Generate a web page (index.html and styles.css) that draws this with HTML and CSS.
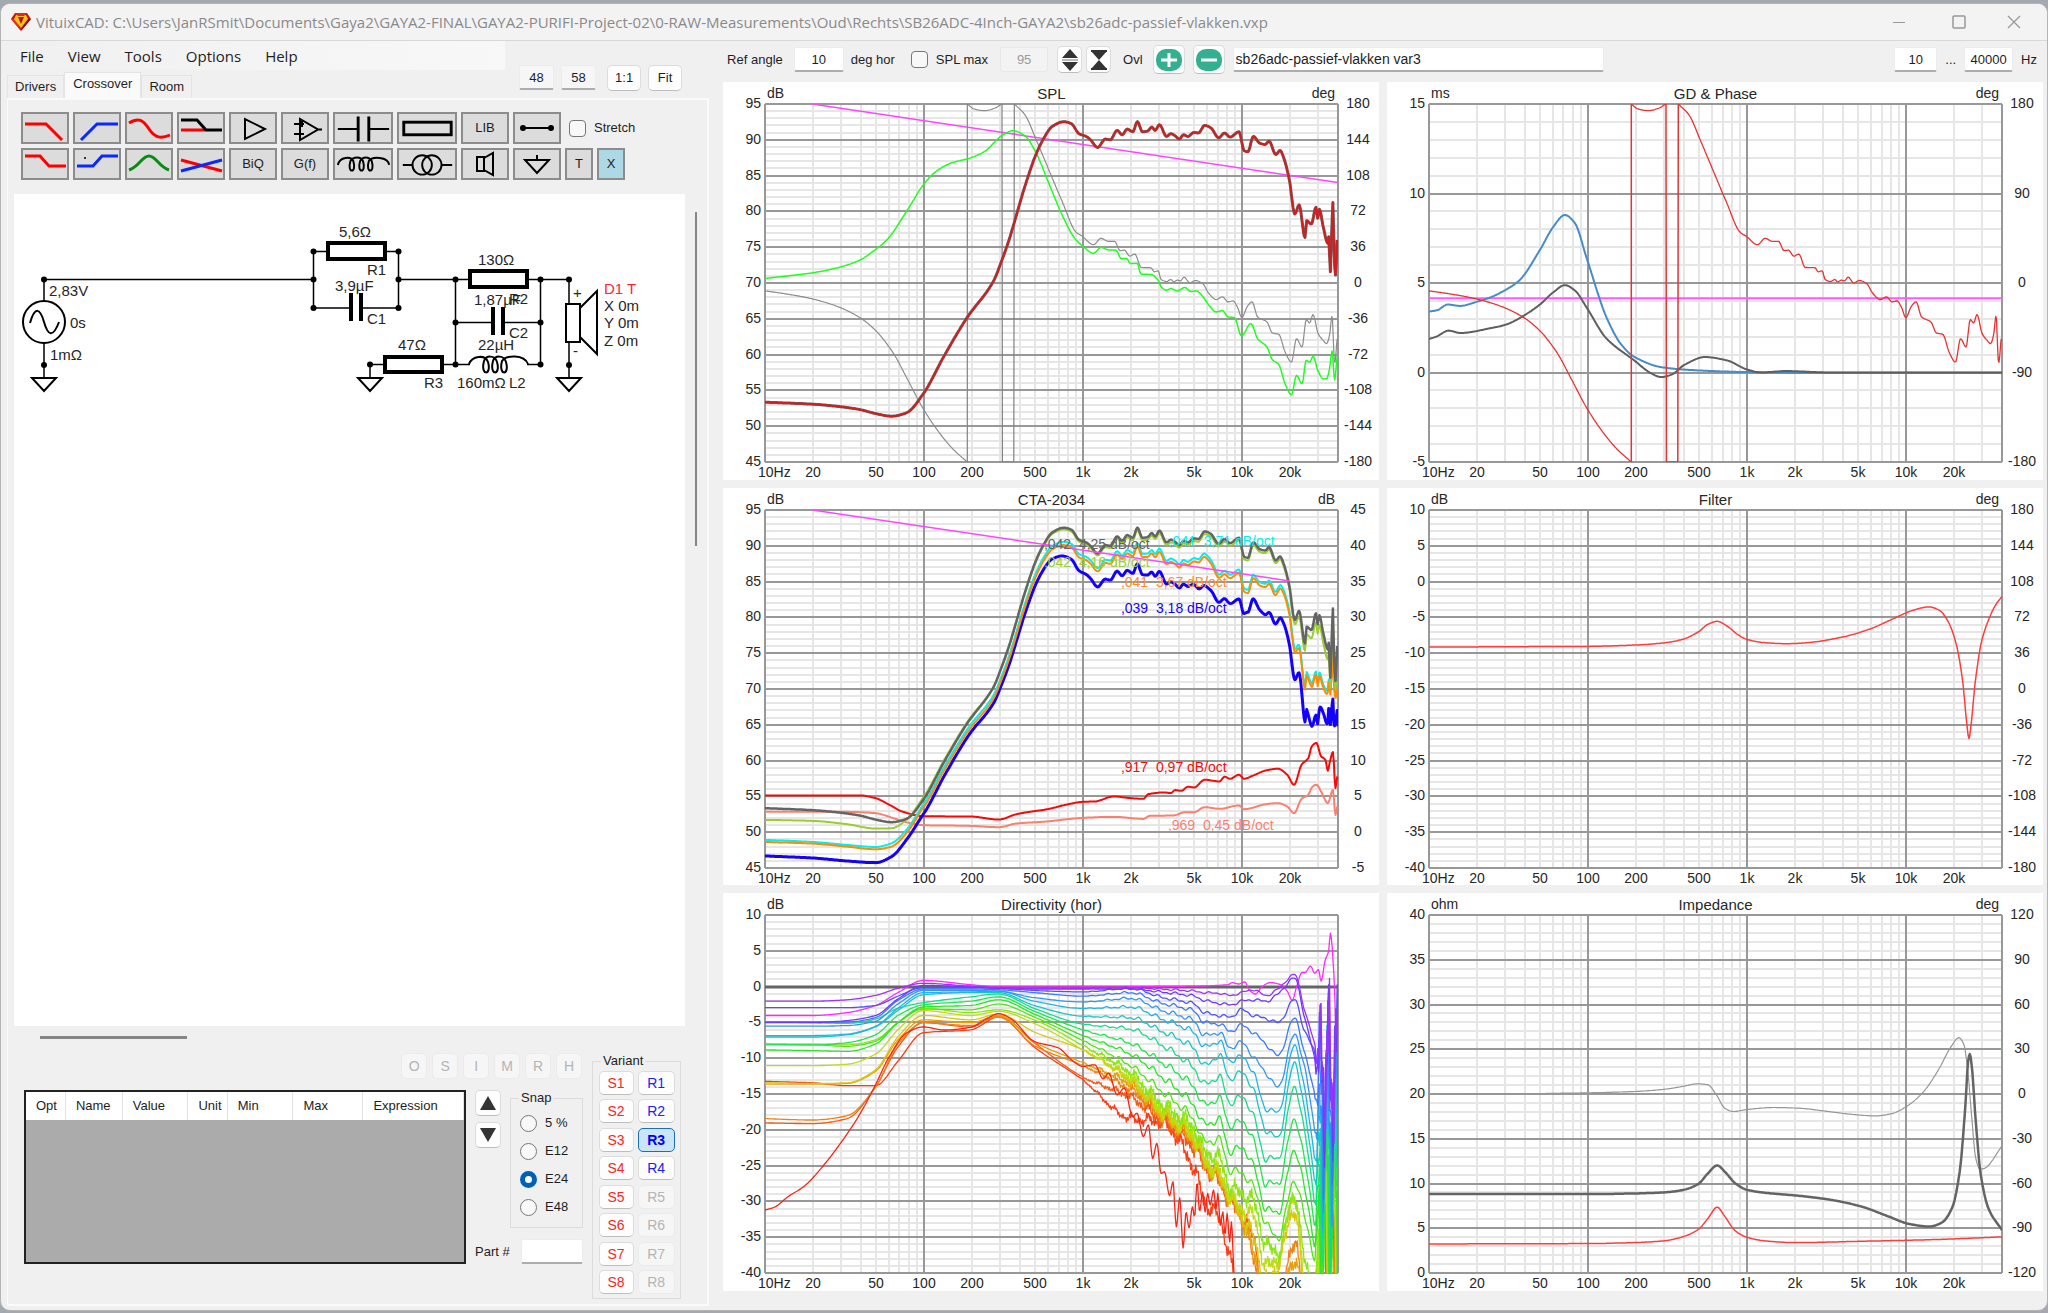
FILE: index.html
```html
<!DOCTYPE html>
<html lang="en">
<head>
<meta charset="utf-8">
<title>VituixCAD</title>
<link rel="stylesheet" href="styles.css">
</head>
<body>
<div class="window">
  <header class="titlebar">
    <svg class="logo" width="20" height="20" viewBox="0 0 20 20"><path d="M4 1h12l4 6-10 12L0 7z" fill="#c8140a"/><path d="M0 7h5l5 12z" fill="#e83020"/><path d="M20 7h-5l-5 12z" fill="#8c0a05"/><path d="M5 3h10l2 4-7 9-7-9z" fill="#f5c21a"/><path d="M7 5h6l-3 7z" fill="#b01808"/><path d="M4 1h12l-3 3H7z" fill="#e02a18"/></svg>
    <h1 class="title">VituixCAD: C:\Users\JanRSmit\Documents\Gaya2\GAYA2-FINAL\GAYA2-PURIFI-Project-02\0-RAW-Measurements\Oud\Rechts\SB26ADC-4Inch-GAYA2\sb26adc-passief-vlakken.vxp</h1>
    <div class="controls">
      <button type="button" aria-label="Minimize"><svg width="14" height="14"><path d="M1 7.500h12" stroke="#999"/></svg></button>
      <button type="button" aria-label="Maximize"><svg width="14" height="14"><rect x="1" y="1" width="12" height="12" rx="1" fill="none" stroke="#999" stroke-width="1.500"/></svg></button>
      <button type="button" aria-label="Close"><svg width="14" height="14"><path d="M1 1l12 12M13 1L1 13" stroke="#999" stroke-width="1.300"/></svg></button>
    </div>
  </header>
  <div class="body">
    <section class="left">
      <div class="head">
        <div class="head-main">
          <nav class="menu"><a href="#file">File</a><a href="#view">View</a><a href="#tools">Tools</a><a href="#options">Options</a><a href="#help">Help</a></nav>
          <div class="tabs" role="tablist">
            <button type="button" role="tab">Drivers</button><button type="button" role="tab" class="active" aria-selected="true">Crossover</button><button type="button" role="tab">Room</button>
          </div>
        </div>
        <div class="zoom">
          <input class="field num" value="48" aria-label="Columns"><input class="field num" value="58" aria-label="Rows">
          <button type="button" class="btn">1:1</button><button type="button" class="btn">Fit</button>
        </div>
      </div>
      <div class="page">
        <div class="toolbar">
          <div class="tool-row">
            <button type="button" class="tool" aria-label="Low pass"><svg viewBox="0 0 48 32"><path class="r" d="M4 12H25L41 28"/></svg></button>
            <button type="button" class="tool" aria-label="High pass"><svg viewBox="0 0 48 32"><path class="b" d="M8 28L24 12H45"/></svg></button>
            <button type="button" class="tool" aria-label="Shelf"><svg viewBox="0 0 48 32"><path class="r" d="M4 11C14 5 18 8 24 17S36 27 45 23"/></svg></button>
            <button type="button" class="tool" aria-label="Low shelf"><svg viewBox="0 0 48 32"><path class="r" d="M4 18H28"/><path class="k" d="M4 8H20L29 18H45"/></svg></button>
            <button type="button" class="tool" aria-label="Buffer"><svg viewBox="0 0 48 32"><path class="k n" d="M16 7V27L36 17Z"/></svg></button>
            <button type="button" class="tool" aria-label="Op amp"><svg viewBox="0 0 48 32"><path class="k t" d="M19 7V28L37 17.500ZM13 12H23M13 22H19M20 22H23M21 9V15M37 17.500H41"/></svg></button>
            <button type="button" class="tool wide" aria-label="Capacitor"><svg viewBox="0 0 62 32"><path class="k t" d="M5 17H26M37 17H58"/><path class="k" d="M26 4V30M37 4V30"/></svg></button>
            <button type="button" class="tool wide" aria-label="Resistor"><svg viewBox="0 0 62 32"><rect class="k" x="7" y="10" width="49" height="13"/></svg></button>
            <button type="button" class="tool">LIB</button>
            <button type="button" class="tool" aria-label="Wire"><svg viewBox="0 0 48 32"><path class="k t" d="M10 16H38"/><circle cx="10" cy="16" r="3"/><circle cx="38" cy="16" r="3"/></svg></button>
            <label class="check"><input type="checkbox">Stretch</label>
          </div>
          <div class="tool-row">
            <button type="button" class="tool" aria-label="Low pass shelf"><svg viewBox="0 0 48 32"><path class="r" d="M4 8H19L28 18H45"/></svg></button>
            <button type="button" class="tool" aria-label="High pass shelf"><svg viewBox="0 0 48 32"><path class="b" d="M4 18H20L29 8H45"/><circle cx="12" cy="10" r="1"/></svg></button>
            <button type="button" class="tool" aria-label="Peak"><svg viewBox="0 0 48 32"><path class="g" d="M4 22C14 19 17 8 24 8S34 19 44 22"/></svg></button>
            <button type="button" class="tool" aria-label="All pass"><svg viewBox="0 0 48 32"><path class="r" d="M4 12L45 23"/><path class="b" d="M4 23L45 12"/></svg></button>
            <button type="button" class="tool">BiQ</button>
            <button type="button" class="tool">G(f)</button>
            <button type="button" class="tool wide" aria-label="Inductor"><svg viewBox="0 0 62 32"><path class="k n" d="M5 17C7 8 19 8 21 13C25 26 14 26 18 13C21 8 29 8 31 13C35 26 24 26 28 13C31 8 37 8 40 13C44 26 33 26 37 13C40 8 57 8 58 17"/></svg></button>
            <button type="button" class="tool wide" aria-label="Transformer"><svg viewBox="0 0 62 32"><circle class="k n" cx="26" cy="17" r="10"/><circle class="k n" cx="36" cy="17" r="10"/><path class="k t" d="M6 17H16M46 17H57"/></svg></button>
            <button type="button" class="tool" aria-label="Driver"><svg viewBox="0 0 48 32"><path class="k n" d="M16 9H23V23H16ZM23 10L32 5V27L23 22"/></svg></button>
            <button type="button" class="tool" aria-label="Ground"><svg viewBox="0 0 48 32"><path class="k n" d="M12 12H36L24 25Z"/><path class="k t" d="M24 7V12"/></svg></button>
            <button type="button" class="tool small">T</button>
            <button type="button" class="tool small on">X</button>
          </div>
        </div>
        <div class="canvas-row">
          <div class="canvas">
            <svg class="schematic" width="660" height="240" viewBox="14 194 660 240">
              <g class="wire">
                <path d="M44 300V279.500H313.500M326 251.500H313.500V308H352M386 251.500H398.500V308H361M398.500 279.500H468M455.500 279.500V364.500M455.500 322.500H493M503 322.500H540.500M527 279.500H569V304M540.500 279.500V364.500M527 364.500H540.500M443 364.500H470M383 364.500H370V378M44 343V378M569 342V378"/>
              </g>
              <g class="part">
                <rect x="328" y="243" width="57" height="16"/><rect x="470" y="271" width="57" height="16"/><rect x="385" y="357" width="57" height="15"/>
                <path d="M351 293V321M361 293V321M493 307V335M503 307V335"/>
              </g>
              <g class="line">
                <circle cx="44" cy="322" r="21"/><path d="M30 323C35 306 40 308 44 322S53 338 59 322"/>
                <path d="M32 378H56L44 391ZM358 378H382L370 391ZM557 378H581L569 391Z"/>
                <rect x="566" y="304" width="14" height="38"/><path d="M580 308L597 291V354L580 337"/>
                <path d="M469 364C472 356 485 354 488 362C492 376 480 376 484 361C486 355 495 355 497 362C501 376 489 376 493 361C495 355 504 355 506 362C510 376 498 376 502 361C506 355 524 354 528 364"/>
              </g>
              <g class="node">
                <circle cx="44" cy="279.500" r="3"/><circle cx="44" cy="365" r="3"/><circle cx="313.500" cy="251.500" r="3"/><circle cx="313.500" cy="279.500" r="3"/><circle cx="313.500" cy="308" r="3"/><circle cx="398.500" cy="251.500" r="3"/><circle cx="398.500" cy="279.500" r="3"/><circle cx="398.500" cy="308" r="3"/><circle cx="455.500" cy="279.500" r="3"/><circle cx="455.500" cy="322.500" r="3"/><circle cx="455.500" cy="364.500" r="3"/><circle cx="540.500" cy="279.500" r="3"/><circle cx="540.500" cy="322.500" r="3"/><circle cx="540.500" cy="364.500" r="3"/><circle cx="569" cy="279.500" r="3"/><circle cx="569" cy="365" r="3"/><circle cx="370" cy="364.500" r="3"/>
              </g>
              <text x="49" y="296">2,83V</text><text x="70" y="328">0s</text><text x="50" y="360">1mΩ</text>
              <text x="339" y="237">5,6Ω</text><text x="367" y="275">R1</text><text x="335" y="291">3,9µF</text><text x="367" y="324">C1</text>
              <text x="478" y="265">130Ω</text><text x="509" y="304">R2</text><text x="474" y="305">1,87µF</text><text x="509" y="338">C2</text>
              <text x="478" y="350">22µH</text><text x="398" y="350">47Ω</text><text x="424" y="388">R3</text><text x="457" y="388">160mΩ</text><text x="509" y="388">L2</text>
              <text x="573" y="298">+</text><text x="573" y="356">-</text><text class="red" x="604" y="294">D1 T</text>
              <text x="604" y="311">X 0m</text><text x="604" y="328">Y 0m</text><text x="604" y="346">Z 0m</text>
            </svg>
          </div>
          <div class="vscroll"><i></i></div>
        </div>
        <div class="hscroll"><i></i></div>
        <div class="bottom">
          <div class="parts">
            <div class="letters"><button type="button" class="btn" disabled>O</button><button type="button" class="btn" disabled>S</button><button type="button" class="btn" disabled>I</button><button type="button" class="btn" disabled>M</button><button type="button" class="btn" disabled>R</button><button type="button" class="btn" disabled>H</button></div>
            <div class="parts-row">
              <div class="table-box">
                <table><colgroup><col style="width:9%"><col style="width:13%"><col style="width:15%"><col style="width:9%"><col style="width:15%"><col style="width:16%"><col></colgroup>
                <thead><tr><th>Opt</th><th>Name</th><th>Value</th><th>Unit</th><th>Min</th><th>Max</th><th>Expression</th></tr></thead></table>
              </div>
              <div class="side">
                <div class="updown">
                  <button type="button" class="btn" aria-label="Up"><svg width="16" height="14"><path d="M8 0L16 14H0Z" fill="#333"/></svg></button>
                  <button type="button" class="btn" aria-label="Down"><svg width="16" height="14"><path d="M0 0H16L8 14Z" fill="#333"/></svg></button>
                </div>
                <fieldset class="snap"><legend>Snap</legend>
                  <label><input type="radio" name="snap">5 %</label><label><input type="radio" name="snap">E12</label><label><input type="radio" name="snap" checked>E24</label><label><input type="radio" name="snap">E48</label>
                </fieldset>
                <label class="part-no">Part # <input class="field"></label>
              </div>
            </div>
          </div>
          <fieldset class="variant"><legend>Variant</legend>
            <div class="variant-grid">
              <button type="button" class="btn s">S1</button><button type="button" class="btn v">R1</button>
              <button type="button" class="btn s">S2</button><button type="button" class="btn v">R2</button>
              <button type="button" class="btn s">S3</button><button type="button" class="btn v current">R3</button>
              <button type="button" class="btn s">S4</button><button type="button" class="btn v">R4</button>
              <button type="button" class="btn s">S5</button><button type="button" class="btn v" disabled>R5</button>
              <button type="button" class="btn s">S6</button><button type="button" class="btn v" disabled>R6</button>
              <button type="button" class="btn s">S7</button><button type="button" class="btn v" disabled>R7</button>
              <button type="button" class="btn s">S8</button><button type="button" class="btn v" disabled>R8</button>
            </div>
          </fieldset>
        </div>
      </div>
    </section>
    <section class="right">
      <div class="bar">
        <label class="bar-label">Ref angle <input class="field angle" value="10"></label><span class="hor">deg hor</span>
        <label class="check max"><input type="checkbox">SPL max</label>
        <input class="field spl" value="95" disabled aria-label="SPL maximum">
        <button type="button" class="btn sq" aria-label="Expand scale"><svg width="18" height="22"><path d="M9 0L17 9H1ZM1 13H17L9 22Z" fill="#333"/><path d="M1 11H17" stroke="#777"/></svg></button>
        <button type="button" class="btn sq" aria-label="Compress scale"><svg width="18" height="20"><path d="M1 1H17L9 10ZM1 19H17L9 10Z" fill="#333"/><path d="M1 1H17M1 19H17" stroke="#333" stroke-width="2"/></svg></button>
        <span class="ovl">Ovl</span>
        <button type="button" class="btn ov" aria-label="Add overlay"><svg width="26" height="22"><rect width="26" height="22" rx="10" fill="#32b090"/><path d="M5 11H21M13 4V18" stroke="#fff" stroke-width="3"/></svg></button>
        <button type="button" class="btn ov" aria-label="Remove overlay"><svg width="26" height="22"><rect width="26" height="22" rx="10" fill="#32b090"/><path d="M5 11H21" stroke="#fff" stroke-width="3"/></svg></button>
        <input class="field name" value="sb26adc-passief-vlakken var3" aria-label="Overlay name">
        <div class="range"><input class="field lo" value="10" aria-label="From"><span>...</span><input class="field hi" value="40000" aria-label="To"><span>Hz</span></div>
      </div>
      <div class="charts">
        <figure class="panel"><svg data-chart="spl"></svg></figure><figure class="panel"><svg data-chart="gd"></svg></figure>
        <figure class="panel"><svg data-chart="cta"></svg></figure><figure class="panel"><svg data-chart="filter"></svg></figure>
        <figure class="panel"><svg data-chart="dir"></svg></figure><figure class="panel"><svg data-chart="imp"></svg></figure>
      </div>
    </section>
  </div>
</div>
<script src="charts.js"></script>
</body>
</html>
```
FILE: styles.css
```css
* { box-sizing: border-box; }
body { margin: 0; background: #a3a9af; color: #1e1e1e; font: 13px/16px "Liberation Sans", Arial, sans-serif; }
button, input { font: inherit; color: inherit; margin: 0; }
button { padding: 0; cursor: default; }
.window { display: flex; flex-direction: column; min-height: calc(100vh - 5px); margin: 3px 0 2px; background: #f0f0f0; border: 1px solid #b4b4b4; border-radius: 10px; overflow: hidden; }
.titlebar { display: flex; align-items: center; gap: 5px; height: 37px; flex: none; padding: 0 18px 0 10px; background: #f3f3f3; border-bottom: 1px solid #d8d8d8; }
.title { margin: 0; flex: 1; font: 15px/20px "Open Sans", sans-serif; color: #8a8a8a; white-space: nowrap; overflow: hidden; }
.controls { display: flex; gap: 16px; }
.controls button { width: 44px; height: 30px; border: 0; background: none; display: grid; place-items: center; }
.controls button:last-child { width: 30px; margin-left: 4px; }
.controls button:nth-child(2) { margin-right: -2px; }
.body { flex: 1; display: grid; grid-template-columns: minmax(700px, 35%) 1fr; }

.left { display: flex; flex-direction: column; padding: 0 8px 4px 6px; }
.head { display: flex; justify-content: space-between; height: 57px; }
.head-main { flex: 1; display: flex; flex-direction: column; justify-content: space-between; }
.menu { display: flex; gap: 24px; width: 498px; height: 29px; padding-left: 13px; align-items: center; background: linear-gradient(90deg, #f0f0f0, #f8f8f8); font: 15px/20px "Open Sans", sans-serif; }
.menu a { color: inherit; text-decoration: none; }
.tabs { display: flex; align-items: flex-end; }
.tabs button { height: 23px; padding: 0 7px; border: 1px solid #e4e4e4; border-bottom: 0; background: #f0f0f0; }
.tabs button.active { height: 26px; background: #fafafa; padding: 0 8px 4px; }
.zoom { display: flex; align-items: center; gap: 7px; padding: 23px 27px 7px 0; }
.zoom .btn { width: 34px; height: 26px; }
.zoom .btn:first-of-type { margin-left: 4px; }
.field { height: 25px; border: 1px solid #ececec; border-bottom: 2px solid #adadad; background: #fff; border-radius: 2px; padding: 0 3px; min-width: 0; }
.num { width: 35px; text-align: center; background: #f6f6f6; }
.btn { display: inline-grid; place-items: center; border: 1px solid #dcdcdc; border-bottom-color: #bdbdbd; border-radius: 5px; background: #fdfdfd; }
.btn:disabled { color: #b4b4b4; background: #f6f6f6; border-color: #ebebeb; }
.page { flex: 1; display: flex; flex-direction: column; padding: 12px 0 5px 6px; border: 1px solid #fafafa; border-width: 2px 2px 2px 1px; }

.toolbar { display: flex; flex-direction: column; gap: 4px; padding-left: 7px; }
.tool-row { display: flex; gap: 4px; align-items: center; }
.tool { width: 48px; height: 32px; border: 2px solid #8c8c8c; background: #dcdcdc; display: grid; place-items: center; }
.tool svg { width: calc(100% + 4px); height: 32px; margin: -2px; }
.tool.wide { width: 60px; }
.tool.small { width: 28px; }
.tool.on { background: #add8e6; }
.tool path, .tool rect, .tool circle.k { fill: none; stroke-width: 3; }
.tool .k { stroke: #000; } .tool .r { stroke: #f00; } .tool .b { stroke: #0a28ff; } .tool .g { stroke: #0a8c14; }
.tool path.t, .tool path.n, .tool circle.n { stroke-width: 2; }
.check { display: flex; align-items: center; gap: 8px; padding-left: 4px; }
.check input { appearance: none; width: 17px; height: 17px; border: 1px solid #777; border-radius: 4px; background: #f8f8f8; }

.canvas-row { flex: 1; display: grid; grid-template-columns: 1fr 22px; margin-top: 14px; min-height: 300px; }
.canvas { background: #fff; overflow: hidden; }
.vscroll { display: flex; justify-content: center; padding-top: 18px; }
.vscroll i { width: 2px; height: 41%; background: #868686; }
.hscroll { height: 27px; padding: 10px 0 0 26px; flex: none; }
.hscroll i { display: block; width: 147px; height: 3px; background: #868686; }
.schematic { display: block; }
.schematic text { font-size: 15px; fill: #262626; }
.schematic text.red { fill: #f23; }
.wire path { fill: none; stroke: #000; stroke-width: 1.500; }
.part rect, .part path { fill: #fff; stroke: #000; stroke-width: 4; }
.line * { fill: none; stroke: #000; stroke-width: 2; }

.bottom { display: flex; justify-content: space-between; height: 246px; padding: 0 26px 0 10px; }
.parts { flex: 1; display: flex; flex-direction: column; gap: 11px; margin-right: 9px; }
.letters { display: flex; justify-content: flex-end; gap: 5px; font-size: 14px; padding-right: 1px; }
.letters .btn { width: 26px; height: 26px; }
.parts-row { display: flex; gap: 9px; height: 174px; }
.table-box { flex: 1; border: 2px solid #222; background: #ababab; }
table { width: 100%; border-collapse: collapse; table-layout: fixed; background: #fff; }
th { height: 28px; padding: 0 0 0 10px; font-weight: normal; text-align: left; border-right: 1px solid #e2e2e2; }
.side { display: grid; grid-template-columns: 26px 73px; grid-template-rows: 138px 25px; column-gap: 9px; row-gap: 11px; }
.updown { display: flex; flex-direction: column; gap: 6px; }
.updown .btn { height: 26px; }
fieldset { margin: 0; padding: 0; border: 1px solid #dcdcdc; min-width: 0; }
legend { margin-left: 8px; padding: 0 2px; }
.snap label { display: flex; align-items: center; gap: 8px; padding-left: 9px; height: 28px; }
.snap label:first-of-type { margin-top: 3px; }
.snap input { appearance: none; width: 17px; height: 17px; border: 1px solid #777; border-radius: 50%; background: #f8f8f8; }
.snap input:checked { border: 5px solid #0060b8; background: #fff; }
.part-no { grid-column: 1 / 3; display: flex; align-items: center; justify-content: space-between; }
.part-no .field { width: 62px; }
.variant { width: 89px; }
.variant-grid { display: grid; grid-template-columns: 35px 37px; column-gap: 4px; justify-content: center; align-content: space-between; grid-auto-rows: 24px; height: 226px; padding: 2px 0 1px; font-size: 14px; }
.s { color: #f52828; } .v { color: #2020f0; }
.current { background: #cce4f7; border: 1px solid #1a6fb5; font-weight: bold; color: #00f; }

.right { display: flex; flex-direction: column; min-width: 0; padding: 0 4px 19px 6px; }
.bar { display: flex; align-items: center; height: 41px; flex: none; padding: 0 6px 4px 4px; white-space: nowrap; }
.bar-label { display: flex; align-items: center; gap: 11px; }
.bar .field { text-align: center; }
.angle { width: 50px; } .hor { margin-left: 7px; }
.max { padding-left: 16px; margin-right: 12px; }
.bar .spl { width: 48px; color: #9a9a9a; background: #f3f3f3; border: 1px solid #e8e8e8; margin-right: 9px; }
.sq { width: 25px; height: 27px; margin-right: 4px; }
.ovl { margin: 0 10px 0 8px; }
.ov { width: 32px; height: 29px; margin-right: 8px; }
.bar .name { flex: 0 1 371px; text-align: left; padding-left: 2px; font-size: 14px; }
.range { display: flex; align-items: center; gap: 8px; margin-left: auto; }
.lo { width: 43px; } .hi { width: 49px; }
.charts { flex: 1; display: grid; grid-template-columns: 1fr 1fr; grid-auto-rows: minmax(240px, 1fr); gap: 8px; }
.panel { margin: 0; background: #fff; display: flex; min-width: 0; }
.panel svg { flex: 1; width: 0; height: auto; min-height: 0; display: block; }
.panel text { font-size: 14px; fill: #262626; white-space: pre; }
.panel .heading { font-size: 15px; }
.grid-minor { stroke: #e6e6e6; stroke-width: 2; fill: none; }
.grid-major { stroke: #989898; stroke-width: 2; fill: none; }
.trace { fill: none; stroke-linejoin: round; }
```
FILE: charts.js
```js
// Traces are stored on a plot area 1354 units wide and 1071 units high;
// x starts at 106, y starts at the chart's own top value.
const PX = 106, PW = 1354, PH = 1071;

const splLine = [[106,1205],[218,1211],[280,1218],[330,1227],[367,1239],[405,1247],[440,1237],[480,1180],[530,1065],[583,953],[645,845],[665,783],[683,718],[720,560],[745,468],[765,415],[785,380],[812,366],[830,372],[848,402],[865,410],[875,420],[892,443],[910,418],[922,420],[938,392],[950,405],[962,388],[975,396],[986,366],[998,396],[1010,394],[1020,382],[1028,392],[1038,375],[1055,410],[1065,402],[1075,408],[1085,418],[1095,405],[1105,410],[1120,398],[1130,400],[1145,377],[1160,385],[1178,414],[1192,400],[1205,412],[1226,396],[1238,452],[1247,456],[1260,410],[1275,430],[1288,434],[1297,424],[1313,464],[1323,452],[1332,475],[1345,540],[1358,642],[1368,615],[1382,712],[1386,662],[1397,672],[1408,622],[1412,655],[1416,628],[1425,680],[1436,730],[1438,710],[1442,815],[1445,700],[1448,608],[1451,770],[1454,825],[1458,720]];
const green = [[106,835],[218,818],[280,802],[330,780],[360,755],[395,718],[445,625],[480,555],[510,515],[545,490],[592,474],[625,455],[665,408],[692,393],[720,408],[745,455],[775,545],[810,650],[838,715],[857,738],[882,760],[900,742],[920,750],[935,750],[948,776],[960,775],[970,790],[985,790],[995,822],[1018,823],[1035,840],[1042,860],[1055,870],[1065,865],[1080,872],[1098,862],[1112,874],[1125,872],[1140,888],[1155,915],[1172,935],[1187,931],[1200,950],[1215,952],[1232,1007],[1254,970],[1270,1015],[1292,1040],[1305,1078],[1320,1092],[1335,1150],[1350,1183],[1362,1125],[1375,1150],[1385,1080],[1393,1085],[1401,1068],[1413,1112],[1425,1135],[1433,1135],[1440,1105],[1446,1052],[1452,1138],[1458,1065]];
const phaseLow = [[106,872],[160,882],[218,896],[280,920],[330,952],[367,990],[410,1060],[440,1130],[480,1225],[520,1300],[550,1345],[583,1383]];
const phaseHump = [[584,313],[600,328],[625,333],[650,325],[665,313]];
const phaseHigh = [[695,313],[720,345],[750,430],[780,520],[810,610],[840,695],[857,710],[882,734],[900,715],[918,724],[932,724],[945,752],[955,750],[968,768],[980,762],[995,802],[1018,803],[1026,815],[1035,812],[1042,838],[1055,844],[1065,838],[1072,845],[1080,840],[1088,842],[1096,831],[1110,848],[1123,841],[1140,850],[1155,880],[1172,898],[1187,890],[1200,905],[1212,902],[1222,920],[1233,952],[1245,920],[1257,905],[1270,950],[1292,965],[1305,998],[1320,1002],[1335,1055],[1350,1085],[1362,1015],[1375,1040],[1385,958],[1393,968],[1401,943],[1413,1000],[1425,1020],[1433,1030],[1440,1005],[1446,945],[1452,1090],[1458,1015]];
const phaseBox = [[[584,313],[584,1384]], [[666,313],[667,1384],[694,1384],[695,313]]];

// Monotone cubic interpolation through the points.
function curve(p) {
  const n = p.length, d = [], m = [];
  for (let i = 0; i < n - 1; i++) d.push((p[i + 1][1] - p[i][1]) / (p[i + 1][0] - p[i][0]));
  for (let i = 0; i < n; i++) {
    if (i === 0) m.push(d[0]);
    else if (i === n - 1) m.push(d[n - 2]);
    else m.push(d[i - 1] * d[i] <= 0 ? 0 : 2 * d[i - 1] * d[i] / (d[i - 1] + d[i]));
  }
  return x => {
    if (x <= p[0][0]) return p[0][1];
    if (x >= p[n - 1][0]) return p[n - 1][1];
    let i = 0;
    while (p[i + 1][0] < x) i++;
    const h = p[i + 1][0] - p[i][0], t = (x - p[i][0]) / h, t2 = t * t, t3 = t2 * t;
    return (2 * t3 - 3 * t2 + 1) * p[i][1] + (t3 - 2 * t2 + t) * h * m[i] + (3 * t2 - 2 * t3) * p[i + 1][1] + (t3 - t2) * h * m[i + 1];
  };
}
function smooth(p) {
  const f = curve(p), out = [];
  for (let x = p[0][0]; x < p[p.length - 1][0]; x += 2) out.push([x, f(x)]);
  out.push(p[p.length - 1]);
  return out;
}
const T = (color, width, pts, straight) => ({ color, width, pts: straight ? pts : smooth(pts) });

// A CTA curve: its own low end, then the on-axis curve lowered by an offset.
function lowered(start, offset) {
  const axis = curve(splLine), off = curve(offset), low = smooth(start);
  for (let x = 482; x <= 1460; x += 2) low.push([x, axis(x) - 255 + off(x)]);
  return low;
}
const cyanOffset = [[480,14],[592,18],[700,32],[812,42],[970,45],[1050,55],[1130,60],[1190,95],[1232,95],[1297,100],[1345,75],[1370,105],[1383,130],[1410,175],[1438,110],[1442,40],[1447,130],[1454,40],[1460,160]];

// Directivity: level in dB at each column, one row per angle.
const columns = [106,218,300,367,420,480,592,658,742,857,970,1040,1120,1145,1180,1205,1232,1260,1290,1318,1358,1380,1405];
const angles = [
  ['#9b30ff', [-2,-2,-1.8,-1.2,-.2,.5,.1,-.1,-.2,-.2,-.1,-.3,-.6,-.8,-.9,-1.2,-.8,-.4,-1.2,-.3,1.7,-3,-8]],
  ['#7038ff', [-5,-5,-4.7,-4,-1.7,.2,0,-.2,-.3,-.3,-.3,-.7,-1.3,-1.9,-2.3,-2.5,-2,-1.8,-2,-1,1.2,-4,-10]],
  ['#5050ff', [-2.9,-2.9,-2.9,-2.6,-1.3,-.1,-.1,-.2,-.5,-.7,-.2,-1.4,-2.4,-3.6,-4,-4.2,-3.2,-4,-4.4,-5,-1.8,-6,-9]],
  ['#3c78ff', [-4.9,-4.9,-4.9,-4.3,-1.9,-.3,-.3,-.4,-.8,-1.3,-.8,-2.2,-3.4,-5,-5.2,-6.2,-5.4,-6.4,-8,-9.6,-4.4,-9,-15]],
  ['#3296f0', [-5.5,-5.5,-5.4,-4.8,-2.4,-.5,-.5,-.6,-1.5,-2.1,-1.6,-3.2,-4.8,-6.8,-6.4,-8.5,-7.8,-9.8,-12,-14,-6.7,-11,-20]],
  ['#1eb4e6', [-6.8,-6.8,-6.6,-5.5,-3,-.8,-.7,-.6,-2,-3,-2.8,-4.4,-6.4,-8.4,-7.6,-10.3,-9.8,-12,-17,-17.5,-8.2,-14,-24]],
  ['#14c8c8', [-7,-7,-6.7,-5.6,-3.3,-1.1,-.8,-.8,-2.6,-4.1,-4.3,-6.1,-8.6,-11,-9.6,-12.8,-12,-14.4,-20,-21,-10.6,-17,-27]],
  ['#14dc8c', [-4.9,-5,-5.1,-4.5,-3,-2.2,-1.4,-1,-3,-5.2,-5.9,-8,-11.4,-13.6,-12.6,-16.2,-15.4,-18,-24,-24,-14,-20,-30]],
  ['#1ee650', [-8,-8.1,-7.8,-6.7,-4,-2.5,-2,-1.4,-3.4,-6,-7.9,-10.4,-14,-16.5,-15.6,-19.4,-18.8,-21.4,-27.5,-27.5,-18.5,-24,-33]],
  ['#28e628', [-8.8,-8.9,-9,-8,-5,-2.8,-2.6,-1.8,-3.8,-6.8,-9.4,-12.4,-16.6,-19.2,-18.6,-23,-22.5,-25,-31,-31.5,-22.8,-28,-36]],
  ['#50e614', [-8.1,-8.1,-8.3,-7.6,-5,-3.1,-3.2,-2.4,-4.2,-7.5,-11,-14.4,-18.6,-21.6,-21.4,-25.6,-26,-28,-33,-35,-27,-32,-38]],
  ['#8ce614', [-8,-8,-8.1,-7.4,-5,-3,-3.6,-3.2,-4.6,-8.2,-12,-16.2,-19.8,-23,-24,-28,-28.8,-30,-36,-37,-29,-38,-42]],
  ['#bedc14', [-11,-11,-10.8,-9.4,-6,-3.3,-4,-3.4,-5.1,-8.8,-12.8,-17,-20.8,-24,-26,-29,-31,-32,-39,-38,-29,-41,-44]],
  ['#d7c80a', [-13.4,-13.5,-13.4,-11.6,-7,-4,-4.6,-3.8,-6.3,-8.8,-13.2,-17.4,-21.2,-24.4,-26.6,-29.4,-32,-35,-41,-39,-31,-42,-44]],
  ['#e6a00a', [-13.6,-13.6,-13.5,-11.8,-7.4,-4.6,-5,-4,-7.7,-10.6,-13.6,-17.6,-21.4,-24.6,-26.8,-29.6,-32.4,-37,-43,-44,-38,-44,-44]],
  ['#f08214', [-18.4,-18.6,-18,-14,-8,-5,-5.4,-4.2,-8.2,-11,-14.4,-17.8,-21.6,-24.8,-27,-29.8,-31.6,-38,-44,-44,-35.3,-44,-44]],
  ['#f55a14', [-19,-19.1,-18.4,-14,-8.4,-5,-5.6,-4,-7.8,-12.6,-15.4,-18.6,-22.4,-25,-27.2,-30,-32,-35,-44,-44,-44,-44,-44]],
  ['#fa3c14', [-13.2,-13.4,-13.8,-13.8,-10.4,-6.4,-6,-4.2,-8.4,-13,-18.4,-18.8,-25.4,-30,-32.4,-38,-44,-44,-44,-44,-44,-44,-44]]
];
const level = v => 287 - v * 21.42;
function directivity(values, k) {
  const f = curve(columns.map((x, i) => [x, values[i]])), out = [];
  for (let x = 106; x <= 1460; x += x < 857 ? 6 : 2) {
    let y = f(x);
    if (x > 840 && x <= 1405) {
      const fade = Math.min(1, (x - 840) / 240), size = k > 10 ? 1 : .15 + k * .05;
      y += fade * size * (.6 * Math.sin(x / 6.3 + k * .25) + .5 * Math.sin(x / 3.1 + k * .5) + (k > 10 ? .7 * Math.sin(x * 1.9 + k * 2) : 0));
    }
    if (x > 1405) {
      const g = Math.min(1, (x - 1405) / 20);
      const swing = (8 + k * .4) * Math.sin(x * .32 + k * .22) + 5 * Math.sin(x * .9 + k);
      y = Math.min(2.5 - k * 1.1, y * (1 - g * .3) + g * swing - g * (k < 5 ? 5 : k * .6));
    }
    out.push([x, level(y)]);
  }
  return out;
}
const magentaDir = [[106,-4],[218,-4],[300,-3.6],[367,-2.6],[420,-.8],[480,.9],[592,.3],[658,0],[857,0],[1120,.1],[1200,.3],[1210,.6],[1225,.4],[1240,.7],[1250,-.4],[1265,-1],[1280,0],[1300,.6],[1325,.3],[1340,-.6],[1352,-1.9],[1362,0],[1375,2],[1382,2],[1395,2.9],[1405,1.9],[1414,2.4],[1420,.8],[1430,3.8],[1438,5],[1442,7.5],[1450,2],[1456,-8]];
const redDir = [[106,955],[130,945],[160,915],[200,882],[245,820],[290,745],[330,668],[367,580],[400,495],[440,425],[480,407],[530,416],[592,408],[630,382],[658,367],[690,385],[742,450],[800,470],[830,505],[857,525],[885,520],[905,562],[918,545],[938,610],[955,590],[975,675],[985,665],[1000,735],[1012,700],[1022,800],[1032,755],[1042,845],[1050,840],[1062,912],[1070,870],[1078,1005],[1086,918],[1094,1068],[1101,960],[1108,1008],[1116,945],[1121,975],[1127,870],[1133,960],[1140,900],[1146,960],[1152,905],[1158,940],[1166,895],[1172,950],[1176,905],[1182,1000],[1188,960],[1193,1030],[1198,965],[1204,1050],[1208,990],[1214,1143]];

const charts = {
  spl: { title: 'SPL', unit: 'dB', unitR: 'deg', top: 313, left: [95, -5, 10], right: [180, -36], minor: 5, traces: [
    T('#ff46ff', 1.5, [[218,313],[1460,548]], 1), T('#8c8c8c', 1.2, phaseLow), T('#8c8c8c', 1.2, phaseHump), T('#8c8c8c', 1.2, phaseHigh),
    T('#808080', 1.2, phaseBox[0], 1), T('#808080', 1.2, phaseBox[1], 1), T('#1eff1e', 1.5, green),
    T('#646464', 3, splLine), T('#d21e1e', 2, splLine) ] },
  gd: { title: 'GD & Phase', unit: 'ms', unitR: 'deg', top: 313, left: [15, -5, 4], right: [180, -90], minor: 5, traces: [
    T('#ff5aff', 2, [[106,894],[1460,894]], 1),
    T('#468cc8', 2, [[106,934],[125,930],[150,913],[180,917],[218,905],[250,892],[280,874],[320,840],[367,752],[400,680],[427,645],[450,668],[480,780],[525,950],[560,1032],[592,1070],[658,1101],[742,1110],[857,1115],[1000,1117],[1460,1117]]),
    T('#5f5f5f', 2, [[106,1016],[125,1008],[152,991],[180,998],[250,984],[290,972],[330,946],[367,914],[400,876],[427,855],[450,870],[480,925],[525,1014],[592,1081],[630,1118],[655,1130],[680,1122],[710,1093],[758,1070],[810,1080],[857,1107],[890,1116],[950,1112],[1050,1116],[1460,1116]]),
    T('#e63232', 1.3, phaseLow), T('#e63232', 1.3, phaseHump), T('#e63232', 1.3, phaseHigh), T('#e63232', 1.5, phaseBox[0], 1), T('#e63232', 1.5, phaseBox[1], 1) ] },
  cta: { title: 'CTA-2034', unit: 'dB', unitR: 'dB', top: 58, left: [95, -5, 10], right: [45, -5], minor: 5, traces: [
    T('#fa8072', 2, [[106,961],[300,961],[367,965],[410,980],[440,992],[480,1001],[592,1003],[658,1007],[700,996],[770,990],[857,979],[930,976],[1000,982],[1015,973],[1070,972],[1100,962],[1120,962],[1145,947],[1180,952],[1226,942],[1238,953],[1290,938],[1318,935],[1340,945],[1356,965],[1374,922],[1390,910],[1398,888],[1409,880],[1420,900],[1436,935],[1448,895],[1454,970],[1458,945]]),
    T('#f50a0a', 2, [[106,912],[330,912],[367,920],[400,940],[430,960],[480,974],[592,975],[658,984],[700,968],[742,959],[770,954],[820,939],[857,931],[885,930],[930,915],[970,920],[1000,922],[1012,908],[1050,903],[1065,905],[1075,896],[1090,898],[1105,886],[1120,888],[1145,865],[1180,870],[1192,856],[1205,862],[1226,850],[1238,862],[1260,852],[1290,837],[1318,832],[1340,850],[1356,880],[1374,820],[1390,800],[1398,765],[1409,755],[1420,795],[1430,805],[1436,838],[1441,810],[1448,782],[1454,890],[1458,855]]),
    T('#1400ff', 3, lowered([[106,1093],[218,1099],[300,1108],[367,1113],[405,1095],[440,1045],[480,968]], [[480,43],[592,42],[700,60],[812,85],[892,100],[986,108],[1040,122],[1110,133],[1150,165],[1190,178],[1226,183],[1247,163],[1297,195],[1345,175],[1368,185],[1382,235],[1408,305],[1425,240],[1436,220],[1442,140],[1448,270],[1454,125],[1460,240]]), 1),
    T('#00f0f0', 2, lowered([[106,1045],[218,1051],[300,1060],[367,1066],[405,1055],[440,1015],[480,939]], cyanOffset), 1),
    T('#ff8c00', 2, lowered([[106,1051],[218,1056],[300,1065],[367,1073],[405,1065],[440,1025],[480,947]], cyanOffset.map(o => [o[0], o[1] + 10])), 1),
    T('#9acd32', 2, lowered([[106,985],[218,988],[300,998],[367,1011],[405,1010],[440,985],[480,918]], [[480,-7],[592,-4],[700,3],[1130,8],[1340,8],[1382,22],[1440,30],[1460,20]]), 1),
    T('#646464', 2.5, splLine.map(p => [p[0], p[1] - 255])),
    T('#ff46ff', 1.5, [[218,58],[1345,270]], 1) ],
    notes: [[765,175,'#646464',',042  4,25 dB/oct'],[765,228,'#9acd32',',042  4,16 dB/oct'],[1060,165,'#00f0f0',',041  3,71 dB/oct'],[947,288,'#ff8c28',',041  3,67 dB/oct'],[947,367,'#1400ff',',039  3,18 dB/oct'],[947,842,'#f50a0a',',917  0,97 dB/oct'],[1058,1016,'#fa8072',',969  0,45 dB/oct']] },
  filter: { title: 'Filter', unit: 'dB', unitR: 'deg', top: 88, left: [10, -5, 10], right: [180, -36], minor: 5, traces: [
    T('#ff3c3c', 1.5, [[106,498],[300,497],[480,496],[592,492],[658,486],[705,475],[742,453],[765,430],[787,421],[810,435],[835,460],[857,475],[900,485],[950,488],[1000,485],[1083,468],[1150,443],[1200,415],[1250,388],[1287,378],[1312,388],[1332,420],[1352,490],[1367,600],[1377,730],[1382,772],[1387,730],[1397,600],[1412,480],[1432,405],[1447,368],[1460,347]]) ] },
  dir: { title: 'Directivity (hor)', unit: 'dB', unitR: '', top: 72, left: [10, -5, 10], right: null, minor: 5, traces: [
    T('#646464', 3, [[106,287],[1460,287]], 1), T('#ff28ff', 1.3, magentaDir.map(p => [p[0], level(p[1])])),
    ...angles.map((a, k) => T(a[0], 1.3, directivity(a[1], k), 1)).reverse(), T('#fa2314', 1.3, redDir) ] },
  imp: { title: 'Impedance', unit: 'ohm', unitR: 'deg', top: 102, left: [40, -5, 8], right: [120, -30], minor: 5, traces: [
    T('#969696', 1.2, [[106,639],[300,637],[480,634],[592,630],[658,624],[705,615],[740,607],[765,610],[785,640],[805,680],[825,690],[857,684],[920,678],[980,680],[1050,690],[1110,699],[1160,703],[1200,696],[1240,670],[1275,630],[1310,565],[1340,495],[1358,469],[1370,490],[1380,580],[1388,700],[1398,830],[1408,862],[1418,860],[1460,793]]),
    T('#646464', 2.5, [[106,937],[480,937],[592,935],[660,932],[705,925],[742,907],[765,875],[787,851],[805,870],[830,905],[857,924],[900,933],[980,942],[1060,955],[1130,975],[1190,1003],[1240,1026],[1288,1034],[1318,1022],[1343,975],[1360,870],[1373,680],[1380,540],[1384,518],[1389,560],[1398,720],[1410,880],[1428,980],[1460,1045]]),
    T('#ff3c3c', 1.5, [[106,1086],[480,1085],[592,1082],[660,1077],[705,1065],[742,1043],[765,1010],[787,976],[803,1000],[830,1047],[857,1066],[900,1077],[970,1082],[1130,1078],[1300,1073],[1460,1065]]) ] }
};

function draw(svg) {
  const c = charts[svg.dataset.chart], box = svg.getBoundingClientRect();
  const x0 = 42, x1 = Math.round(box.width) - 41, y0 = 22, y1 = Math.round(box.height) - 18, w = x1 - x0, h = y1 - y0;
  const fx = f => x0 + w * Math.log10(f / 10) / Math.log10(4000);
  const text = (x, y, s, anchor, extra = '') => `<text x="${x}" y="${y}" text-anchor="${anchor}" ${extra}>${s.toString().replace('&', '&amp;')}</text>`;
  let minor = '', major = '', out = '';
  for (let dec = 10; dec < 40000; dec *= 10)
    for (let i = 1; i < 10 && dec * i < 40000; i++) {
      const x = Math.round(fx(dec * i));
      if (i === 1) major += `M${x} ${y0}V${y1}`; else minor += `M${x} ${y0}V${y1}`;
    }
  major += `M${x1} ${y0}V${y1}`;
  const n = c.left[2];
  for (let i = 0; i <= n * c.minor; i++) {
    const y = Math.round(y0 + h * i / (n * c.minor));
    if (i % c.minor) minor += `M${x0} ${y}H${x1}`; else major += `M${x0} ${y}H${x1}`;
  }
  out += `<path class="grid-minor" d="${minor}"/><path class="grid-major" d="${major}"/>`;
  for (let i = 0; i <= n; i++) {
    const y = Math.round(y0 + h * i / n) + 4;
    out += text(x0 - 4, y, c.left[0] + c.left[1] * i, 'end');
    if (c.right) out += text(x1 + 20, y, c.right[0] + c.right[1] * i, 'middle');
  }
  [[20, '20'], [50, '50'], [100, '100'], [200, '200'], [500, '500'], [1e3, '1k'], [2e3, '2k'], [5e3, '5k'], [1e4, '10k'], [2e4, '20k']].forEach(l => { out += text(Math.round(fx(l[0])), y1 + 15, l[1], 'middle'); });
  out += text(x0 - 7, y1 + 15, '10Hz', 'start');
  out += text(x0 + 2, y0 - 6, c.unit, 'start') + text(x1 - 3, y0 - 6, c.unitR, 'end') + text((x0 + x1) / 2, y0 - 5, c.title, 'middle', 'class="heading"');
  const id = 'clip-' + svg.dataset.chart;
  const X = x => x0 + (x - PX) / PW * w, Y = y => y0 + (y - c.top) / PH * h;
  out += `<clipPath id="${id}"><rect x="${x0}" y="${y0}" width="${w}" height="${h}"/></clipPath><g clip-path="url(#${id})">`;
  c.traces.forEach(t => { out += `<path class="trace" stroke="${t.color}" stroke-width="${t.width}" d="M${t.pts.map(p => X(p[0]).toFixed(1) + ' ' + Y(p[1]).toFixed(1)).join('L')}"/>`; });
  out += '</g>';
  (c.notes || []).forEach(t => { out += text(X(t[0]), Y(t[1]), t[3], 'start', `style="fill:${t[2]}"`); });
  svg.innerHTML = out;
}
const all = document.querySelectorAll('svg[data-chart]');
const redraw = () => all.forEach(draw);
redraw();
window.addEventListener('resize', redraw);
```
